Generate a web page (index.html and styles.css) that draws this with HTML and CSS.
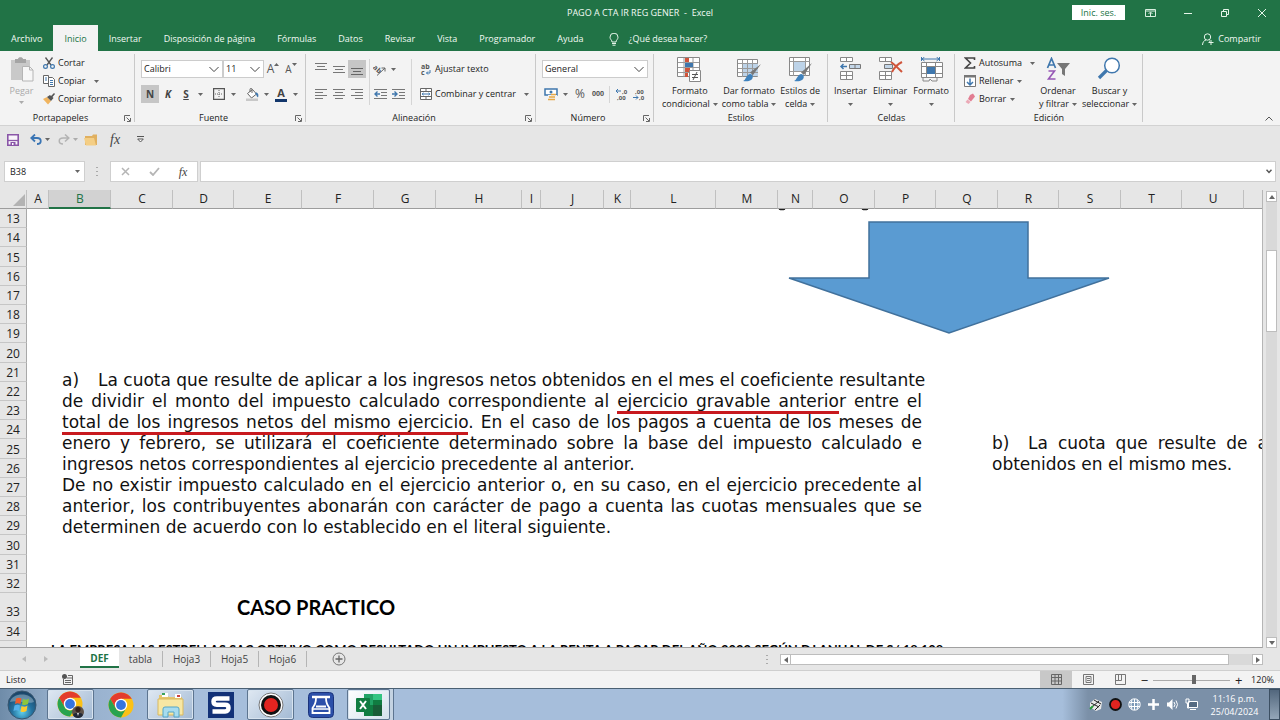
FILE: index.html
```html
<!DOCTYPE html>
<html lang="es">
<head>
<meta charset="utf-8">
<title>PAGO A CTA IR REG GENER - Excel</title>
<link rel="stylesheet" href="styles.css">
</head>
<body>
<svg class="defs" aria-hidden="true">
  <symbol id="caret" viewBox="0 0 5 3"><path d="M0 0h5L2.500 3z" fill="#666"/></symbol>
  <symbol id="chev" viewBox="0 0 11 7"><path d="M.5.8 5.500 5.800 10.500.8" fill="none" stroke="#444" stroke-width="1.100"/></symbol>
  <symbol id="launch" viewBox="0 0 7 7"><path d="M.5 6V.5H6M2.500 2.500 6 6M6.500 3v3.500H3" fill="none" stroke="#666"/></symbol>
  <symbol id="chrome" viewBox="0 0 26 26">
    <circle cx="13" cy="13" r="12.500" fill="#fbc116"/>
    <path d="M2.200 6.800A12.500 12.500 0 0 1 23.800 6.800H13L7.600 16.100z" fill="#e33b2e"/>
    <path d="M2.200 6.800A12.500 12.500 0 0 0 13 25.500l5.400-9.400A6 6 0 0 1 7.600 16.100z" fill="#29a350"/>
    <circle cx="13" cy="13" r="6.200" fill="#fff"/><circle cx="13" cy="13" r="4.900" fill="#3474e0"/>
  </symbol>
</svg>

<header class="top">
  <div class="titlebar">
    <h1 class="title">PAGO A CTA IR REG GENER &nbsp;-&nbsp; Excel</h1>
    <div class="wincontrols">
      <button class="signin">Inic. ses.</button>
      <button class="win" aria-label="Opciones de cinta"><svg width="11" height="8" viewBox="0 0 11 8"><path d="M.5.5h10v7H.5zM.5 2h10M5.500 7V3.500M3.500 5l2-2 2 2" fill="none" stroke="#d9efe0"/></svg></button>
      <button class="win" aria-label="Minimizar"><svg width="8" height="8"><path d="M0 4.500h8" stroke="#e6f5ea"/></svg></button>
      <button class="win" aria-label="Restaurar"><svg width="8" height="8" viewBox="0 0 8 8"><path d="M.5 2.500h5v5h-5zM2.500 2V.5h5v5H6" fill="none" stroke="#e6f5ea"/></svg></button>
      <button class="win" aria-label="Cerrar"><svg width="8" height="8" viewBox="0 0 8 8"><path d="m0 0 8 8M8 0 0 8" stroke="#e6f5ea"/></svg></button>
    </div>
  </div>
  <nav class="tabs">
    <button>Archivo</button><button class="on">Inicio</button><button>Insertar</button><button>Disposición de página</button><button>Fórmulas</button><button>Datos</button><button>Revisar</button><button>Vista</button><button>Programador</button><button>Ayuda</button>
    <button class="tell"><svg width="10" height="13" viewBox="0 0 10 13"><path d="M3 9C3 7 1 6.500 1 4.200a4 4 0 0 1 8 0C9 6.500 7 7 7 9zM3 10.500h4M3.500 12.200h3" fill="none" stroke="#e6f5ea"/></svg>¿Qué desea hacer?</button>
    <button class="share"><svg width="12" height="12" viewBox="0 0 12 12"><circle cx="5.500" cy="4" r="3.200" fill="none" stroke="#e6f5ea"/><path d="M.5 12C.7 9 2 7.500 4 7M7 8l1 .3M9 7v5M6.500 9.500h5" fill="none" stroke="#e6f5ea"/></svg>Compartir</button>
  </nav>
</header>

<section class="ribbon">
  <div class="group clip">
    <div class="body">
      <button class="big paste"><svg width="24" height="25" viewBox="0 0 24 25"><path d="M1 3h19v20H1z" fill="#c9c9c9"/><path d="M5 2h3c0-2.500 5-2.500 5 0h3v4H5z" fill="#a5a5a5"/><path d="M12.500 9.500h7l3.500 3.500v11H12.500z" fill="#f7f7f7" stroke="#b5b5b5"/><path d="M19.500 9.500V13H23" fill="none" stroke="#b5b5b5"/></svg><span>Pegar</span><svg class="caret pale"><use href="#caret"/></svg></button>
      <div class="stack">
        <button><svg width="12" height="12" viewBox="0 0 12 12"><path d="M2.500.5 8 8M9.500.5 4 8" stroke="#555" stroke-width="1.300"/><circle cx="2.500" cy="9.500" r="1.900" fill="none" stroke="#3f77ad" stroke-width="1.200"/><circle cx="9.500" cy="9.500" r="1.900" fill="none" stroke="#3f77ad" stroke-width="1.200"/></svg>Cortar</button>
        <button><svg width="12" height="12" viewBox="0 0 12 12"><path d="M.5.5h5v8h-5z" fill="#fff" stroke="#666"/><path d="M2 3h2M2 5h2" stroke="#3f77ad"/><path d="M5.500 2.500h4l2 2v7h-6z" fill="#fff" stroke="#666"/><path d="M7 5.500h3M7 7.500h3M7 9.500h3" stroke="#3f77ad"/></svg>Copiar<svg class="caret far"><use href="#caret"/></svg></button>
        <button><svg width="12" height="12" viewBox="0 0 12 12"><path d="M0 6l4-2 4 4-3 3.500z" fill="#f0b45f"/><path d="M4 4l3-2 1 1 3-3 1 1-2.500 3L10.500 5 8 8z" fill="#555"/></svg>Copiar formato</button>
      </div>
    </div>
    <div class="caption">Portapapeles<svg class="launch"><use href="#launch"/></svg></div>
  </div>

  <div class="group">
    <div class="body rows font">
      <div class="line">
        <label class="combo fname"><select aria-label="Fuente"><option>Calibri</option></select><svg class="chev"><use href="#chev"/></svg></label>
        <label class="combo fsize"><select aria-label="Tamaño"><option>11</option></select><svg class="chev"><use href="#chev"/></svg></label>
        <button class="ic grow">A<svg width="5" height="3" viewBox="0 0 5 3"><path d="M0 3 2.500 0 5 3z" fill="#666"/></svg></button>
        <button class="ic grow small">A<svg width="5" height="3" viewBox="0 0 5 3"><path d="M0 0h5L2.500 3z" fill="#666"/></svg></button>
      </div>
      <div class="line">
        <button class="ic sel"><b>N</b></button><button class="ic"><b><i>K</i></b></button><button class="ic"><b><u>S</u></b></button><svg class="caret"><use href="#caret"/></svg><span class="sep"></span>
        <button class="ic"><svg width="12" height="12" viewBox="0 0 12 12"><path d="M.6.600h10.800v10.800H.6z" fill="none" stroke="#555" stroke-width="1.200"/><path d="M6 2v8M2 6h8" stroke="#666" stroke-dasharray="1 1"/></svg></button><svg class="caret"><use href="#caret"/></svg><span class="sep"></span>
        <button class="ic"><svg width="13" height="13" viewBox="0 0 13 13"><path d="m1.500 5.500 5-4 4 4.500-5 4z" fill="#fff" stroke="#666"/><path d="M4 4V1.500C4 0 6 0 6 1.500V5" fill="none" stroke="#666"/><path d="M10 4.500c2 0 3 2.500 2 5-2-1-1-3-3-4z" fill="#3f77ad"/><path d="M0 10.500h12V13H0z" fill="#c8c8c8"/></svg></button><svg class="caret"><use href="#caret"/></svg>
        <button class="ic fcolor"><b>A</b></button><svg class="caret"><use href="#caret"/></svg>
      </div>
    </div>
    <div class="caption">Fuente<svg class="launch"><use href="#launch"/></svg></div>
  </div>

  <div class="group">
    <div class="body align">
      <div class="rows trio">
        <div class="line">
          <button class="ic"><svg width="12" height="12"><path d="M0 .5h12M2 3.500h8M0 6.500h12" stroke="#777"/></svg></button>
          <button class="ic"><svg width="12" height="12"><path d="M0 3.500h12M2 6.500h8M0 9.500h12" stroke="#777"/></svg></button>
          <button class="ic sel"><svg width="12" height="12"><path d="M0 5.500h12M2 8.500h8M0 11.500h12" stroke="#666"/></svg></button>
        </div>
        <div class="line">
          <button class="ic"><svg width="12" height="10"><path d="M0 .5h12M0 3.500h8M0 6.500h12M0 9.500h8" stroke="#777"/></svg></button>
          <button class="ic"><svg width="12" height="10"><path d="M0 .5h12M2 3.500h8M0 6.500h12M2 9.500h8" stroke="#777"/></svg></button>
          <button class="ic"><svg width="12" height="10"><path d="M0 .5h12M4 3.500h8M0 6.500h12M4 9.500h8" stroke="#777"/></svg></button>
        </div>
      </div>
      <div class="rows indent">
        <div class="line">
          <button class="ic"><svg width="14" height="13" viewBox="0 0 14 13"><text class="abc" x="0" y="6" transform="rotate(42 1 5)">ab</text><path d="M4 12.500 12 5M8.500 5H12v3.500" fill="none" stroke="#666"/></svg></button><svg class="caret"><use href="#caret"/></svg>
        </div>
        <div class="line">
          <button class="ic"><svg width="13" height="10"><path d="M0 .5h13M7 3.500h6M7 6.500h6M0 9.500h13" stroke="#777"/><path d="M6 5H1M3.500 2.500 1 5l2.500 2.500" fill="none" stroke="#3f77ad" stroke-width="1.400"/></svg></button>
          <button class="ic"><svg width="13" height="10"><path d="M0 .5h13M7 3.500h6M7 6.500h6M0 9.500h13" stroke="#777"/><path d="M0 5h5M2.500 2.500 5 5 2.500 7.500" fill="none" stroke="#3f77ad" stroke-width="1.400"/></svg></button>
        </div>
      </div>
      <div class="rows wraps">
        <div class="line"><button class="txt"><svg width="12" height="13" viewBox="0 0 12 13"><text class="abc" x="1" y="6">ab</text><text class="abc" x="1" y="12">c</text><path d="M10 7v3H6.500M8 8.500 6.500 10 8 11.500" fill="none" stroke="#3f77ad"/></svg>Ajustar texto</button></div>
        <div class="line"><button class="txt"><svg width="12" height="12" viewBox="0 0 12 12"><path d="M.5.500h11v11H.5zM.5 3.500h11M.5 8.500h11M6 .5v3M6 8.500v3" fill="#fff" stroke="#666"/><path d="M2 6h8M3.500 4.800 2.200 6l1.300 1.200M8.500 4.800 9.800 6 8.500 7.200" fill="none" stroke="#3f77ad"/></svg>Combinar y centrar<svg class="caret far"><use href="#caret"/></svg></button></div>
      </div>
    </div>
    <div class="caption">Alineación<svg class="launch"><use href="#launch"/></svg></div>
  </div>

  <div class="group">
    <div class="body rows number">
      <div class="line"><label class="combo full"><select aria-label="Formato de número"><option>General</option></select><svg class="chev"><use href="#chev"/></svg></label></div>
      <div class="line">
        <button class="ic"><svg width="14" height="13" viewBox="0 0 14 13"><path d="M1 1h12v6H1z" fill="#fff" stroke="#3f77ad" stroke-width="1.500"/><circle cx="7" cy="4" r="1.500" fill="#3f77ad"/><path d="M4 7h9v5.500H4z" fill="#f3f3f3"/><path d="M7 6.500h5M5 9h6M4 11.500h7" stroke="#e8a947" stroke-width="1.500"/></svg></button><svg class="caret"><use href="#caret"/></svg>
        <button class="ic pct">%</button><button class="ic mil">000</button><span class="sep"></span>
        <button class="ic"><svg width="13" height="13" viewBox="0 0 13 13"><path d="M6 3H1M3 1 1 3l2 2" fill="none" stroke="#3f77ad"/><text class="dec" x="7" y="6">,0</text><text class="dec" x="2" y="12">,00</text></svg></button>
        <button class="ic"><svg width="13" height="13" viewBox="0 0 13 13"><text class="dec" x="2" y="6">,00</text><path d="M0 9.500h5M3 7.500l2 2-2 2" fill="none" stroke="#3f77ad"/><text class="dec" x="6" y="12">,0</text></svg></button>
      </div>
    </div>
    <div class="caption">Número<svg class="launch"><use href="#launch"/></svg></div>
  </div>

  <div class="group">
    <div class="body bigs styles">
      <button class="big"><svg width="25" height="25" viewBox="0 0 25 25"><path d="M.5.500h22v19H.5z" fill="#fff" stroke="#888"/><path d="M7 1v19M16 1v19M1 5.500h21M1 10.500h21M1 15.500h21" stroke="#999"/><path d="M8 1h4v4H8zM8 11h5v4H8zM8 16h3v4H8z" fill="#d0543a"/><path d="M8 6h8v4H8z" fill="#3f77ad"/><path d="M12.500 13.500h11v11h-11z" fill="#fff" stroke="#888"/><path d="M15 17.500h6M15 20.500h6M20 15l-4 8" stroke="#555"/></svg><span>Formato<br>condicional<svg class="caret"><use href="#caret"/></svg></span></button>
      <button class="big"><svg width="25" height="25" viewBox="0 0 25 25"><path d="M.5 2.500h20v17H.5z" fill="#fff" stroke="#888"/><path d="M6 7h15v12H6z" fill="#bdd3e8"/><path d="M5.500 3v17M10.500 3v17M15.500 3v17M1 6.500h20M1 11.500h20M1 15.500h20" stroke="#999"/><path d="m24 7-8 11-3-2.500z" fill="#777"/><path d="M6 24c3-1 3-6 7-7 3 0 4 4 1 6-2 1.500-5 1.500-8 1z" fill="#3f82bd"/></svg><span>Dar formato<br>como tabla<svg class="caret"><use href="#caret"/></svg></span></button>
      <button class="big"><svg width="25" height="25" viewBox="0 0 25 25"><path d="M1.500.500h20v18h-20z" fill="#fff" stroke="#888"/><path d="M6 5h12v9H6z" fill="#bdd3e8"/><path d="M5.500 1v18M17.500 1v18M2 4.500h20M2 14.500h20" stroke="#999"/><path d="m24 6-8 12-3-2.500z" fill="#777"/><path d="M6 24c3-1 3-6 7-7 3 0 4 4 1 6-2 1.500-5 1.500-8 1z" fill="#3f82bd"/></svg><span>Estilos de<br>celda<svg class="caret"><use href="#caret"/></svg></span></button>
    </div>
    <div class="caption">Estilos</div>
  </div>

  <div class="group">
    <div class="body bigs cells">
      <button class="big"><svg width="23" height="25" viewBox="0 0 23 25"><path d="M1.500.500h12v4h-12zM7.500.500v4M1.500 14.500h12v8h-12zM7.500 14.500v8M1.500 18.500h12" fill="#fff" stroke="#888"/><path d="M10.500 7.500h11v4h-11zM16 7.500v4" fill="#c3d6e8" stroke="#777"/><path d="M8 9.500H2M4.500 7 2 9.500 4.500 12" fill="none" stroke="#3f77ad" stroke-width="1.500"/></svg><span>Insertar<br><svg class="caret"><use href="#caret"/></svg></span></button>
      <button class="big"><svg width="25" height="25" viewBox="0 0 25 25"><path d="M1.500.500h12v4h-12zM7.500.500v4M1.500 14.500h12v8h-12zM7.500 14.500v8M1.500 18.500h12" fill="#fff" stroke="#888"/><path d="M6.500 7.500h8v4h-8z" fill="#c3d6e8" stroke="#777"/><path d="M13 5c4 3 7 6 11 10M24 5c-4 2-8 6-10 10" fill="none" stroke="#d0543a" stroke-width="2"/></svg><span>Eliminar<br><svg class="caret"><use href="#caret"/></svg></span></button>
      <button class="big"><svg width="25" height="25" viewBox="0 0 25 25"><path d="M2.500 5.500h21v15h-21z" fill="#fff" stroke="#888"/><path d="M7.500 6v14M16.500 6v14M3 9.500h20M3 16.500h20M4 21v3h6l1-2 2 2h5v-3" fill="none" stroke="#888"/><path d="M8 10h8v7H8z" fill="#3f77ad"/><path d="M3 2h17M5.500 0 3 2l2.500 2M17.500 0 20 2l-2.500 2M2.500 0v4M20.500 0v4" fill="none" stroke="#3f77ad"/></svg><span>Formato<br><svg class="caret"><use href="#caret"/></svg></span></button>
    </div>
    <div class="caption">Celdas</div>
  </div>

  <div class="group">
    <div class="body edit">
      <div class="stack">
        <button><svg width="12" height="12" viewBox="0 0 12 12"><path d="M10.500 3V1H1.500l5 5-5 5h9V9" fill="none" stroke="#444" stroke-width="1.600"/></svg>Autosuma<svg class="caret far"><use href="#caret"/></svg></button>
        <button><svg width="12" height="12" viewBox="0 0 12 12"><path d="M.5.500h11v11H.5z" fill="#fff" stroke="#777"/><path d="M0 0h12v2.500H0z" fill="#777"/><path d="M6 3.500V10M3 7l3 3 3-3" fill="none" stroke="#3f77ad" stroke-width="1.500"/></svg>Rellenar<svg class="caret"><use href="#caret"/></svg></button>
        <button><svg width="12" height="12" viewBox="0 0 12 12"><path d="m6 2 3-1.500 2 3-4 5-3-2.500z" fill="#e27d92"/><path d="m3.500 6.500 3 2.500-2 2L1.500 9z" fill="#eba9b6"/></svg>Borrar<svg class="caret"><use href="#caret"/></svg></button>
      </div>
      <button class="big sort"><svg width="25" height="25" viewBox="0 0 25 25"><path d="M1.500 11 5.500 1.500 9.500 11M3 8h5" fill="none" stroke="#3f77ad" stroke-width="1.700"/><path d="M2.500 14h6l-6 8h7" fill="none" stroke="#9657b5" stroke-width="1.600"/><path d="M11 6h13l-5 6v7l-3-2v-5z" fill="#777"/></svg><span>Ordenar<br>y filtrar<svg class="caret"><use href="#caret"/></svg></span></button>
      <button class="big"><svg width="25" height="25" viewBox="0 0 25 25"><path d="M9.500 13.500 2 21" stroke="#3f77ad" stroke-width="3.200"/><circle cx="15" cy="8.500" r="7.300" fill="#fff" stroke="#3f77ad" stroke-width="1.500"/></svg><span>Buscar y<br>seleccionar<svg class="caret"><use href="#caret"/></svg></span></button>
    </div>
    <div class="caption">Edición</div>
  </div>
  <button class="collapse" aria-label="Contraer"><svg width="8" height="5" viewBox="0 0 8 5"><path d="M.5 4.500 4 1l3.500 3.500" fill="none" stroke="#555"/></svg></button>
</section>

<div class="qat">
  <button><svg width="12" height="12" viewBox="0 0 12 12"><path d="M.8.800h10.400v10.400H.8z" fill="#f8f4fa" stroke="#8a56a8" stroke-width="1.600"/><path d="M1 6.500h10" stroke="#8a56a8" stroke-width="1.300"/><path d="M3.500 8h5v4h-5z" fill="#8a56a8"/><path d="M5 9h1.500v2H5z" fill="#fff"/></svg></button>
  <button><svg width="12" height="11" viewBox="0 0 12 11"><path d="M5 .5 1.200 4 5 7.500M1.500 4H7c5 0 5 6 0 6" fill="none" stroke="#3a75b4" stroke-width="1.800"/></svg><svg class="caret"><use href="#caret"/></svg></button>
  <button class="faded"><svg width="12" height="11" viewBox="0 0 12 11"><path d="M7 .5 10.800 4 7 7.500M10.500 4H5c-5 0-5 6 0 6" fill="none" stroke="#777" stroke-width="1.500"/></svg><svg class="caret"><use href="#caret"/></svg></button>
  <button class="open-file"><svg width="14" height="12" viewBox="0 0 14 12"><path d="M1 2h7l1-1.500h4V11H1z" fill="#e0b060"/><path d="M0 4h10l2 7.500H2z" fill="#f4ce85"/></svg></button>
  <button class="fx">fx</button>
  <button><svg width="7" height="7" viewBox="0 0 7 7"><path d="M0 .5h7M.7 3h5.600L3.500 6z" fill="#fff" stroke="#555"/></svg></button>
</div>

<div class="formula">
  <label class="namebox"><input aria-label="Cuadro de nombres" value="B38"><svg class="caret"><use href="#caret"/></svg></label>
  <span class="dots"></span>
  <div class="fbtns">
    <button aria-label="Cancelar"><svg width="9" height="9"><path d="m1 1 7 7M8 1 1 8" stroke="#b5b5b5" stroke-width="1.500"/></svg></button>
    <button aria-label="Aceptar"><svg width="11" height="9"><path d="m1 5 3 3 6-7" fill="none" stroke="#b5b5b5" stroke-width="1.800"/></svg></button>
    <button class="fx small">fx</button>
  </div>
  <label class="fbar"><input aria-label="Barra de fórmulas"><svg width="6" height="5" viewBox="0 0 6 5"><path d="m.5.800 2.500 2.700L5.500.8" fill="none" stroke="#555" stroke-width="1.500"/></svg></label>
</div>

<main class="work">
  <div class="sheet">
    <table>
      <colgroup><col class="w27"><col class="w22"><col class="w62"><col class="w62"><col class="w61"><col class="w68"><col class="w72"><col class="w62"><col class="w86"><col class="w19"><col class="w63"><col class="w27"><col class="w85"><col class="w62"><col class="w35"><col class="w62"><col class="w61"><col class="w62"><col class="w61"><col class="w62"><col class="w61"><col class="w62"><col></colgroup>
      <thead><tr><th class="corner"><svg width="12" height="12"><path d="M12 0v12H0z" fill="#b3b3b3"/></svg></th><th>A</th><th class="active">B</th><th>C</th><th>D</th><th>E</th><th>F</th><th>G</th><th>H</th><th>I</th><th>J</th><th>K</th><th>L</th><th>M</th><th>N</th><th>O</th><th>P</th><th>Q</th><th>R</th><th>S</th><th>T</th><th>U</th><th></th></tr></thead>
      <tbody>
        <tr><th>13</th><td colspan="22"></td></tr>
        <tr><th>14</th><td colspan="22"></td></tr>
        <tr class="r20"><th>15</th><td colspan="22"></td></tr>
        <tr><th>16</th><td colspan="22"></td></tr>
        <tr><th>17</th><td colspan="22"></td></tr>
        <tr><th>18</th><td colspan="22"></td></tr>
        <tr><th>19</th><td colspan="22"></td></tr>
        <tr class="r20"><th>20</th><td colspan="22"></td></tr>
        <tr><th>21</th><td colspan="22"></td></tr>
        <tr><th>22</th><td colspan="22"></td></tr>
        <tr><th>23</th><td colspan="22"></td></tr>
        <tr><th>24</th><td colspan="22"></td></tr>
        <tr class="r20"><th>25</th><td colspan="22"></td></tr>
        <tr><th>26</th><td colspan="22"></td></tr>
        <tr><th>27</th><td colspan="22"></td></tr>
        <tr><th>28</th><td colspan="22"></td></tr>
        <tr><th>29</th><td colspan="22"></td></tr>
        <tr class="r20"><th>30</th><td colspan="22"></td></tr>
        <tr><th>31</th><td colspan="22"></td></tr>
        <tr><th>32</th><td colspan="22"></td></tr>
        <tr class="r29"><th>33</th><td colspan="22" class="case">CASO PRACTICO</td></tr>
        <tr><th>34</th><td colspan="22"></td></tr>
        <tr><th></th><td colspan="22" class="clipped">LA EMPRESA LAS ESTRELLAS SAC OBTUVO COMO RESULTADO UN IMPUESTO A LA RENTA A PAGAR DEL AÑO 2022 SEGÚN DJ ANUAL DE S/ 18,108</td></tr>
      </tbody>
    </table>
    <div class="canvas">
      <svg class="tails" width="100" height="2"><path d="M5 0q3 1 6 0M88 0q3 1 6 0" fill="none" stroke="#222" stroke-width="1.500"/></svg>
      <svg class="arrow" width="326" height="114" viewBox="0 0 326 114"><path d="M82 1h159v56h81L162 112 2 57h80z" fill="#5a9bd2" stroke="#41719c" stroke-width="1.500"/></svg>
      <div class="note a">
        <p class="item"><span>a)</span><span class="j">La cuota que resulte de aplicar a los ingresos netos obtenidos en el mes el coeficiente resultante</span></p>
        <p class="j">de dividir el monto del impuesto calculado correspondiente al <span class="red">ejercicio gravable anterio</span>r entre el</p>
        <p class="j"><span class="red">total de los ingresos netos del mismo ejercicio</span>. En el caso de los pagos a cuenta de los meses de</p>
        <p class="j">enero y febrero, se utilizará el coeficiente determinado sobre la base del impuesto calculado e</p>
        <p>ingresos netos correspondientes al ejercicio precedente al anterior.</p>
        <p class="j">De no existir impuesto calculado en el ejercicio anterior o, en su caso, en el ejercicio precedente al</p>
        <p class="j">anterior, los contribuyentes abonarán con carácter de pago a cuenta las cuotas mensuales que se</p>
        <p>determinen de acuerdo con lo establecido en el literal siguiente.</p>
      </div>
      <div class="note b">
        <p class="item"><span>b)</span><span class="j">La cuota que resulte de a</span></p>
        <p>obtenidos en el mismo mes.</p>
      </div>
    </div>
  </div>
  <div class="vscroll"><button class="sb"><svg width="6" height="4"><path d="M0 4 3 0l3 4z" fill="#666"/></svg></button><div class="vtrack"><div class="vthumb"></div></div><button class="sb"><svg width="6" height="4"><path d="M0 0h6L3 4z" fill="#666"/></svg></button></div>
</main>

<div class="sheets">
  <div class="navs"><svg width="4" height="6"><path d="M4 0v6L0 3z" fill="#bbb"/></svg><svg width="4" height="6"><path d="M0 0v6l4-3z" fill="#bbb"/></svg></div>
  <button class="st on">DEF</button><button class="st first">tabla</button><button class="st">Hoja3</button><button class="st">Hoja5</button><button class="st">Hoja6</button>
  <button class="add" aria-label="Nueva hoja"><svg width="14" height="14"><circle cx="7" cy="7" r="6" fill="none" stroke="#777"/><path d="M7 3.500v7M3.500 7h7" stroke="#666" stroke-width="1.300"/></svg></button>
  <span class="dots grip"></span>
  <div class="hscroll"><button class="sb"><svg width="4" height="6"><path d="M4 0v6L0 3z" fill="#666"/></svg></button><div class="htrack"><div class="hthumb"></div></div><button class="sb"><svg width="4" height="6"><path d="M0 0v6l4-3z" fill="#666"/></svg></button></div>
</div>

<div class="status">
  <span>Listo</span>
  <svg class="macro" width="11" height="11" viewBox="0 0 11 11"><circle cx="2.500" cy="2.500" r="2.500" fill="#555"/><path d="M1.500 5v5.500h9v-9H6M5 4h5M3 6.500h6M3 8.500h6" fill="none" stroke="#666"/></svg>
  <div class="views">
    <button class="on"><svg width="11" height="11"><path d="M.5.500h10v10H.5zM.5 3.500h10M.5 7h10M4 .5v10M7.500.500v10" fill="none" stroke="#666"/></svg></button>
    <button><svg width="11" height="11"><path d="M.5.500h10v10H.5zM3 2.500h5v6H3zM4 4.500h3M4 6.500h3" fill="none" stroke="#777"/></svg></button>
    <button><svg width="11" height="11"><path d="M.5.500h10v10H.5zM.5 6.500h6v-6M3.500.500v6" fill="none" stroke="#777"/></svg></button>
  </div>
  <div class="zoom"><button>−</button><input type="range" min="0" max="100" value="54" aria-label="Zoom"><button>+</button><span>120%</span></div>
</div>

<footer class="taskbar">
  <button class="start" aria-label="Inicio"><svg width="30" height="30" viewBox="0 0 30 30"><defs><radialGradient id="orb" cx=".5" cy=".75" r=".7"><stop offset="0" stop-color="#5fd0ee"/><stop offset=".5" stop-color="#24729f"/><stop offset="1" stop-color="#1b4467"/></radialGradient></defs><circle cx="15" cy="15" r="14" fill="url(#orb)" stroke="#38566f"/><path d="M3 12C5 2 25 2 27 12 19 15 11 9 3 12z" fill="#fff" opacity=".3"/><path d="M9 8.500c2-1 4-1 5.500 0L13.500 14c-2-1-4-1-5.500 0z" fill="#ee5c2c"/><path d="M16 9c2 1 4 1 6-.5L21 14c-2 1.300-4 1.300-6 .5z" fill="#8dc63c"/><path d="M7.500 15.500c2-1 4-1 5.500 0L12 21c-2-1-4-1-5.500 0z" fill="#55b2ea"/><path d="M14.500 16c2 1 4 1 6-.5l-1 5.500c-2 1.300-4 1.300-6 .5z" fill="#fcc92e"/></svg></button>
  <button class="app open"><svg width="28" height="28" viewBox="0 0 28 28"><use href="#chrome" width="26" height="26"/><circle cx="21" cy="21" r="6" fill="#5e5248"/><circle cx="21" cy="18.500" r="2.600" fill="#33231c"/><path d="M16 24c1-3 9-3 10 0-2 4-8 4-10 0z" fill="#222936"/><path d="m20 22 1 3 1-3z" fill="#ddd"/></svg></button>
  <button class="app"><svg width="26" height="26"><use href="#chrome"/></svg></button>
  <button class="app open"><svg width="28" height="26" viewBox="0 0 28 26"><path d="M2 3h8l2 2h13v17H2z" fill="#e5c56e"/><path d="M5 1h6v4H5z" fill="#fff"/><path d="M5 1h3v2H5z" fill="#3aa35b"/><path d="M18 2h6v4h-6z" fill="#fff"/><path d="M20 3h3v2h-3z" fill="#c44"/><path d="M1 7h25v16H1z" fill="#f7e7a4" stroke="#d9b95f"/><path d="M6 25V17q0-2 2-2h12q2 0 2 2v8h-5v-5h-6v5z" fill="#a7dcef" stroke="#55a5c7"/></svg></button>
  <button class="app"><svg width="26" height="26" viewBox="0 0 26 26"><path d="M0 0h26v26H0z" fill="#123177"/><path d="M21.500 6.500H9Q5.500 6.500 5.500 9.500T9 12.800h8q3.500 0 3.500 3.200T17 19.500H4.500" fill="none" stroke="#fff" stroke-width="4.500"/></svg></button>
  <button class="app open"><svg width="26" height="26" viewBox="0 0 26 26"><circle cx="13" cy="13" r="12" fill="#fff" stroke="#777"/><circle cx="13" cy="13" r="10" fill="#111"/><circle cx="13" cy="13" r="7" fill="#e32420"/></svg></button>
  <button class="app"><svg width="26" height="26" viewBox="0 0 26 26"><rect x=".5" y=".5" width="25" height="25" rx="4" fill="#2b4fa9" stroke="#1b347c"/><path d="M4 5h18" stroke="#fff" stroke-width="2.500"/><path d="M8 6c0 4-1 7-3.500 10v5h17v-5C19 13 18 10 18 6M8 14.500h10" fill="none" stroke="#fff" stroke-width="1.800"/><path d="M5 17h16" stroke="#fff" stroke-width="1.500"/></svg></button>
  <button class="app open excel"><svg width="26" height="24" viewBox="0 0 26 24"><path d="M8 1h9v22H8z" fill="#21a366"/><path d="M17 1h9v6h-9z" fill="#33c481"/><path d="M8 12h9v6H8z" fill="#107c41"/><path d="M17 7h9v5h-9zM8 17h9v6H8z" fill="#107c41"/><path d="M17 12h9v11h-9z" fill="#185c37"/><rect y="5" width="14" height="14" rx="1" fill="#107c41"/><path d="m4 8 6 8M10 8l-6 8" stroke="#fff" stroke-width="2"/></svg></button>
  <span class="edge"></span>
  <div class="tray">
    <svg width="14" height="14" viewBox="0 0 14 14"><path d="m1 5 5-4 7 3-1 7-5 2-6-4z" fill="#e8e8e8"/><path d="m2 5 8 4M5 2l7 4M3 9l7-6M6 12l5-5" fill="none" stroke="#222"/><path d="m1 11 3-3" stroke="#2b9a3b" stroke-width="2"/></svg>
    <svg width="13" height="13"><circle cx="6.500" cy="6.500" r="5.500" fill="#e32420" stroke="#111" stroke-width="1.800"/></svg>
    <svg width="13" height="13"><circle cx="6.500" cy="6.500" r="5.700" fill="#7c9ab8" stroke="#fff"/><path d="M1 4.500h11M1 8.500h11M6.500 1v11M4 1.500q-2 5 0 10M9 1.500q2 5 0 10" fill="none" stroke="#fff"/></svg>
    <svg width="13" height="13"><path d="M6.500 1v11M1 6.500h11" stroke="#fff" stroke-width="2.500"/></svg>
    <svg width="13" height="13"><path d="M1 4.500h2L6.500 1v11L3 8.500H1z" fill="#fff"/><path d="M8 4q2 2.500 0 5M10 2.500q3 4 0 8" fill="none" stroke="#fff"/></svg>
    <svg width="13" height="13"><path d="M3.500 3.500h9v6h-9zM5 11.500h6" fill="#556b82" stroke="#fff"/><path d="M1 1h3v4H1zM2.500 5v5H4" fill="none" stroke="#fff"/></svg>
  </div>
  <time class="clock">11:16 p.m.<br>25/04/2024</time>
  <button class="desk" aria-label="Mostrar escritorio"></button>
</footer>
</body>
</html>
```
FILE: styles.css
```css
* { box-sizing: border-box; }
body { margin: 0; height: 100vh; display: flex; flex-direction: column; overflow: hidden; background: #e6e6e6; color: #222; font: 500 9px/12px "Open Sans", "Noto Sans", sans-serif; }
button, input, select { font: inherit; color: inherit; border: 0; background: none; padding: 0; margin: 0; outline: 0; border-radius: 0; }
button { display: flex; align-items: center; justify-content: center; white-space: nowrap; flex: none; }
svg { flex: none; display: block; }
p, h1 { margin: 0; }
.defs { position: absolute; width: 0; height: 0; }
.caret { width: 5px; height: 3px; margin: 0 4px; }
.chev { width: 10px; height: 7px; }

.top { background: #217346; color: #f2faf4; flex: none; }
.titlebar { position: relative; height: 25px; display: flex; justify-content: flex-end; align-items: center; }
.title { position: absolute; left: 0; right: 0; text-align: center; font-size: 9px; font-weight: 500; line-height: 25px; }
.wincontrols { display: flex; align-items: center; position: relative; }
.signin { width: 53px; height: 15px; background: #fff; color: #217346; margin-right: 7px; }
.win { width: 37px; height: 25px; }
.tabs { display: flex; height: 26px; }
.tabs button { padding: 2px 11px 0; height: 26px; }
.tabs .on { background: #f3f3f3; color: #217346; }
.tabs .tell { gap: 10px; padding-left: 14px; }
.tabs .share { margin-left: auto; gap: 4px; padding-right: 19px; }

.ribbon { flex: none; height: 75px; background: #f3f3f3; border-bottom: 1px solid #d2d2d2; display: grid; grid-template-columns: 135px 171px 230px 118px 174px 127px 188px 1fr; }
.group { position: relative; display: flex; flex-direction: column; padding-top: 3px; }
.group::after { content: ""; position: absolute; right: 0; top: 3px; bottom: 3px; width: 1px; background: #c9c9c9; }
.body { height: 58px; display: flex; }
.caption { position: relative; text-align: center; line-height: 12px; padding-right: 14px; }
.launch { position: absolute; right: 4px; top: 3px; width: 7px; height: 7px; }
.stack { display: flex; flex-direction: column; }
.stack button { height: 18px; gap: 3px; justify-content: flex-start; }
.stack .caret { margin: 0 0 0 1px; }
.stack .caret.far { margin-left: 5px; }
.paste { width: 43px; color: #aaa; }
.big { flex-direction: column; justify-content: flex-start; padding-top: 3px; text-align: center; line-height: 13px; }
.big > svg { margin-bottom: 2px; }
.big .caret { display: inline-block; vertical-align: middle; margin: 0 0 0 3px; }
.big.paste .caret { display: block; margin: 4px 0 0; opacity: .5; }
.cells .big .caret { margin: 0; }
.rows { display: flex; flex-direction: column; gap: 7px; padding-top: 6px; }
.line { display: flex; align-items: center; height: 18px; }
.font, .number { padding-left: 6px; padding-right: 6px; }
.ic { width: 18px; height: 18px; }
.sel { background: #c6c6c6; }
.sep { width: 1px; height: 17px; background: #d5d5d5; margin: 0 2px; }
.combo { position: relative; height: 18px; background: #fff; border: 1px solid #ccc; display: flex; }
.combo select { appearance: none; width: 100%; padding-left: 2px; }
.combo .chev { position: absolute; right: 3px; top: 5px; pointer-events: none; }
.fname { width: 82px; }
.fsize { width: 41px; }
.full { width: 100%; }
.grow { font-size: 12px; align-items: flex-start; color: #555; line-height: 18px; }
.grow.small { font-size: 10px; }
.grow svg { margin-top: 3px; }
.font .ic b { font-size: 10px; color: #444; }
.font .caret { margin: 0 3px; }
.font .fcolor b { font-size: 11px; border-bottom: 3px solid #12366b; line-height: 12px; width: 12px; }
.trio { padding-left: 6px; }
.indent { margin-left: 3px; padding-left: 2px; background: linear-gradient(#d5d5d5, #d5d5d5) 0 5px / 1px 46px no-repeat; width: 42px; }
.indent .caret { margin: 0 2px; }
.wraps { padding-left: 9px; background: linear-gradient(#d5d5d5, #d5d5d5) 0 5px / 1px 46px no-repeat; }
.txt { gap: 3px; }
.txt .far { margin-left: 5px; }
.abc { font: bold 7px "Open Sans", sans-serif; fill: #555; }
.dec { font: bold 6px "Open Sans", sans-serif; fill: #555; }
.pct { font-size: 12px; color: #555; }
.mil { font-size: 7px; font-weight: 700; color: #555; }
.number .caret { margin: 0 3px; }
.bigs { padding: 0 6px; justify-content: space-between; }
.styles { padding: 0 8px; }
.styles + .caption, .cells + .caption, .edit + .caption { padding-right: 0; }
.edit { padding-left: 9px; }
.edit .stack { width: 70px; }
.sort { width: 48px; }
.collapse { justify-self: end; align-self: end; width: 22px; height: 14px; }

.qat { flex: none; height: 27px; display: flex; align-items: center; gap: 11px; padding-left: 7px; }
.qat .caret { margin-left: 3px; margin-right: -6px; }
.faded { opacity: .45; margin-left: 3px; }
.open-file { margin-left: 1px; }
.fx { font: italic 14px/14px "Liberation Serif", serif; color: #444; margin: 0 6px 0 1px; }
.fx.small { font-size: 12px; margin: 0; }

.formula { flex: none; height: 37px; padding: 8px 4px 8px; display: flex; }
.namebox { width: 81px; height: 21px; border: 1px solid #cfcfcf; background: #fff; display: flex; align-items: center; }
.namebox input { flex: 1; min-width: 0; padding-left: 5px; }
.dots { width: 2px; height: 9px; background: repeating-linear-gradient(#aaa 0 1px, transparent 1px 4px); align-self: center; margin: 0 12px 0 11px; }
.fbtns { width: 88px; height: 21px; border: 1px solid #cfcfcf; background: #fff; display: flex; justify-content: space-around; margin-right: 2px; }
.fbar { flex: 1; height: 21px; border: 1px solid #cfcfcf; background: #fff; display: flex; align-items: center; padding-right: 3px; }
.fbar input { flex: 1; }

.work { flex: 1; min-height: 0; display: flex; }
.sheet { flex: 1; min-width: 0; position: relative; overflow: hidden; background: linear-gradient(#e6e6e6 18px, #fff 18px); border-bottom: 1px solid #a0a0a0; border-right: 1px solid #b5b5b5; }
table { table-layout: fixed; width: 100%; border-collapse: separate; border-spacing: 0; }
th { font-size: 12px; font-weight: 400; line-height: 14px; padding: 0; background: #e6e6e6; color: #222; }
thead th { height: 19px; padding-left: 1px; border-bottom: 1px solid #9d9d9d; border-right: 1px solid #c0c0c0; }
thead th:last-child { border-right: 0; }
thead .active { background: #d2d2d2; color: #217346; border-bottom: 2px solid #217346; }
.corner svg { margin: 2px 0 0 12px; }
tbody tr { height: 19px; }
tbody .r20 { height: 20px; }
tbody .r29 { height: 29px; }
tbody th { border-right: 1px solid #a9a9a9; border-bottom: 1px solid #c6c6c6; vertical-align: bottom; padding-bottom: 1px; }
tbody .r29 th { padding-bottom: 2px; }
td { padding: 0; background: #fff; color: #000; white-space: nowrap; }
td.case { font: bold 20px/27px Lato, sans-serif; padding-left: 210px; }
td.clipped { font: bold 13px/19px Lato, sans-serif; padding-left: 24px; }
.w19 { width: 19px; } .w22 { width: 22px; } .w27 { width: 27px; } .w35 { width: 35px; } .w61 { width: 61px; } .w62 { width: 62px; } .w63 { width: 63px; } .w68 { width: 68px; } .w72 { width: 72px; } .w85 { width: 85px; } .w86 { width: 86px; }
.canvas { position: absolute; left: 27px; top: 19px; right: 0; bottom: 0; overflow: hidden; }
.tails { position: absolute; left: 747px; top: 0; }
.arrow { position: absolute; left: 760px; top: 12px; }
.note { position: absolute; font: 17px/21px "DejaVu Sans", sans-serif; color: #111; white-space: nowrap; }
.note.a { left: 35px; top: 161px; width: 860px; }
.note.b { left: 965px; top: 224px; width: 276px; }
.j { text-align: justify; text-align-last: justify; white-space: normal; }
.item { display: flex; }
.item > span:first-child { width: 36px; flex: none; }
.item .j { flex: 1; white-space: nowrap; }
.red { border-bottom: 3px solid #c8191e; }

.vscroll { width: 17px; display: flex; flex-direction: column; padding: 1px 3px 0; }
.sb { width: 11px; height: 11px; background: #fff; border: 1px solid #bdbdbd; }
.vtrack { flex: 1; background: #d9d9d9; padding-top: 48px; }
.vthumb { height: 82px; background: #fff; border: 1px solid #bdbdbd; }

.sheets { flex: none; height: 23px; display: flex; border-bottom: 1px solid #cfcfcf; color: #444; font-size: 10px; align-items: flex-start; }
.navs { width: 80px; display: flex; gap: 18px; padding: 8px 0 0 22px; }
.st { width: 48px; height: 16px; margin: 3px 0; border-right: 1px solid #b5b5b5; }
.st.first { width: 44px; }
.st.on { width: 39px; height: 20px; margin: 0; padding-top: 2px; background: #fff; color: #217346; font-weight: 700; border: 0; border-bottom: 2px solid #217346; }
.add { margin: 4px 0 0 25px; }
.grip { margin-left: auto; margin-top: 7px; align-self: flex-start; }
.hscroll { width: 38%; max-width: 483px; display: flex; margin: 6px 17px 0 0; }
.htrack { flex: 1; background: #d9d9d9; display: flex; }
.hthumb { width: 95%; background: #fff; border: 1px solid #bdbdbd; border-left: 0; }

.status { flex: none; height: 17px; background: #f3f3f3; display: flex; align-items: center; padding-left: 6px; }
.macro { margin-left: 36px; }
.views { margin-left: auto; display: flex; }
.views button { width: 32px; height: 17px; }
.views .on { background: #c8c8c8; }
.zoom { display: flex; align-items: center; gap: 4px; width: 140px; margin-left: 4px; }
.zoom button { font-size: 13px; width: 9px; }
.zoom input { appearance: none; flex: 1; min-width: 0; height: 12px; background: linear-gradient(#aaa, #aaa) 0 6px / 100% 1px no-repeat; }
.zoom input::-webkit-slider-thumb { appearance: none; width: 4px; height: 9px; background: #666; }
.zoom span { padding: 0 6px 0 4px; }

.taskbar { flex: none; height: 32px; display: flex; border-top: 1px solid #4b6073; background: linear-gradient(90deg, #6f8ca9 0, #8fa9c5 45px, #a6bedb 160px, #a6bedb 83%, #7b90a8 85%); }
.start { width: 43px; margin-right: 4px; }
.app { width: 47px; margin-right: 3px; border: 1px solid transparent; }
.open { border-color: #5d7590; border-radius: 2px; background: linear-gradient(135deg, #dfe8f2, #a3bad4); box-shadow: inset 0 0 0 1px #d7e3ef; }
.app.excel { width: 43px; margin-right: 0; background: linear-gradient(135deg, #fff, #d3e0ec); }
.edge { width: 4px; border-right: 1px solid #5d7590; background: #c4d3e2; }
.tray { margin-left: auto; display: flex; align-items: center; gap: 6px; }
.clock { width: 53px; margin-left: 10px; text-align: center; color: #fff; font-size: 9px; line-height: 13px; padding-top: 3px; }
.desk { width: 11px; margin-left: 8px; border: 1px solid #3c4f62; background: linear-gradient(#52677d, #94a6b8); }
```
